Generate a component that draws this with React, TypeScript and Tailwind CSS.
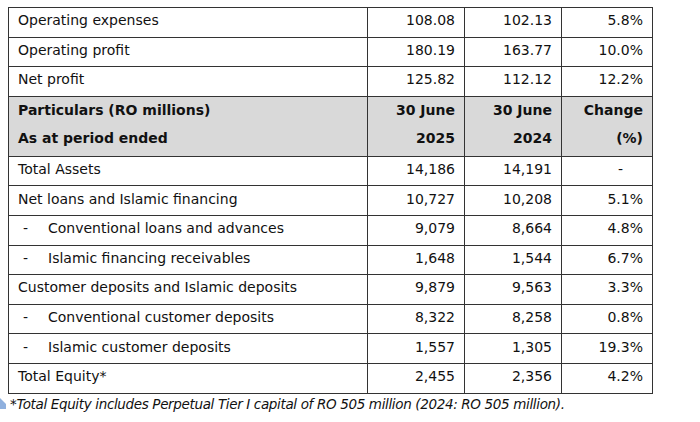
const rows: { label: string; sub?: boolean; a: string; b: string; c: string }[] = [
  { label: 'Total Assets', a: '14,186', b: '14,191', c: '-' },
  { label: 'Net loans and Islamic financing', a: '10,727', b: '10,208', c: '5.1%' },
  { label: 'Conventional loans and advances', sub: true, a: '9,079', b: '8,664', c: '4.8%' },
  { label: 'Islamic financing receivables', sub: true, a: '1,648', b: '1,544', c: '6.7%' },
  { label: 'Customer deposits and Islamic deposits', a: '9,879', b: '9,563', c: '3.3%' },
  { label: 'Conventional customer deposits', sub: true, a: '8,322', b: '8,258', c: '0.8%' },
  { label: 'Islamic customer deposits', sub: true, a: '1,557', b: '1,305', c: '19.3%' },
  { label: 'Total Equity*', a: '2,455', b: '2,356', c: '4.2%' },
]

const income = [
  { label: 'Operating expenses', a: '108.08', b: '102.13', c: '5.8%' },
  { label: 'Operating profit', a: '180.19', b: '163.77', c: '10.0%' },
  { label: 'Net profit', a: '125.82', b: '112.12', c: '12.2%' },
]

const td = 'border border-[#333] px-[9px] pt-0 pb-[4px] h-[29.6px]'
const th = 'border border-[#333] px-[9px] pt-0 pb-[3px] align-top'

const Row = ({ r }: { r: { label: string; sub?: boolean; a: string; b: string; c: string } }) => (
  <tr>
    <td className={`${td} text-left`}>
      {r.sub ? (
        <span className="flex">
          <span className="w-[30px] pl-[5px]">-</span>
          <span>{r.label}</span>
        </span>
      ) : (
        r.label
      )}
    </td>
    <td className={`${td} text-right`}>{r.a}</td>
    <td className={`${td} text-right`}>{r.b}</td>
    <td className={`${td} text-right`}>
      {r.c === '-' ? <span className="pr-[20px]">-</span> : r.c}
    </td>
  </tr>
)

const Head = ({ top, bottom, right }: { top: string; bottom: string; right?: boolean }) => (
  <td className={`${th} ${right ? 'text-right' : 'text-left'}`}>
    <div className={`h-[26px] flex items-center ${right ? 'justify-end' : ''}`}>{top}</div>
    <div className={`h-[30px] flex items-center ${right ? 'justify-end' : ''}`}>{bottom}</div>
  </td>
)

const App = () => {
  return (
    <div className="w-[700px] h-[422px] bg-white relative overflow-hidden text-[#111]" style={{ fontFamily: '"DejaVu Sans", Verdana, sans-serif' }}>
      <div className="pt-[7px] pl-[8px]">
        <table className="border-collapse text-[14px] leading-none table-fixed w-[644px]">
          <colgroup>
            <col className="w-[359px]" />
            <col className="w-[97px]" />
            <col className="w-[97px]" />
            <col className="w-[91px]" />
          </colgroup>
          <tbody>
            {income.map((r) => (
              <Row key={r.label} r={r} />
            ))}
            <tr className="bg-[#d9d9d9] font-bold">
              <Head top="Particulars (RO millions)" bottom="As at period ended" />
              <Head top="30 June" bottom="2025" right />
              <Head top="30 June" bottom="2024" right />
              <Head top="Change" bottom="(%)" right />
            </tr>
            {rows.map((r) => (
              <Row key={r.label} r={r} />
            ))}
          </tbody>
        </table>
      </div>
      <div className="flex items-start mt-[2px]">
        <svg width="8" height="14" viewBox="0 0 8 14" className="shrink-0 mt-[1px]">
          <polygon points="0,1 6,7 6,12 0,12" fill="#8fb0de" />
        </svg>
        <p className="italic text-[13.5px] tracking-[-0.35px] leading-[16px] ml-[2px]">
          *Total Equity includes Perpetual Tier I capital of RO 505 million (2024: RO 505 million).
        </p>
      </div>
    </div>
  )
}

export default App
